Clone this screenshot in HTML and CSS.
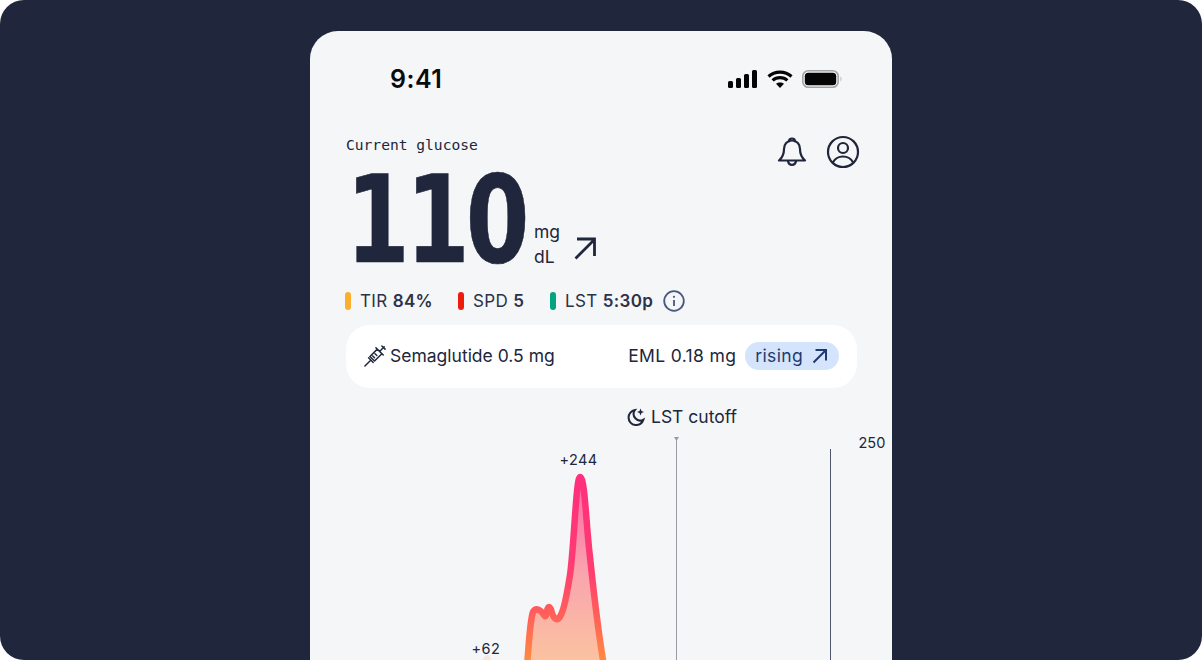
FILE: index.html
```html
<!DOCTYPE html>
<html lang="en">
<head>
<meta charset="utf-8">
<title>Glucose</title>
<link rel="stylesheet" href="styles.css">
</head>
<body>
<main class="stage">
  <section class="phone">
    <header class="status">
      <span class="clock">9:41</span>
      <div class="status-icons">
        <svg width="29" height="18" viewBox="0 0 29 18" class="signal"><rect x="0" y="11" width="5" height="7" rx="1.5"/><rect x="8" y="8" width="5" height="10" rx="1.5"/><rect x="16" y="4" width="5" height="14" rx="1.5"/><rect x="24" y="0" width="5" height="18" rx="1.5"/></svg>
        <svg width="26" height="18" viewBox="0 0 26 18" class="wifi"><path d="M1.5 6.5C7.8 0.7 18.2 0.7 24.5 6.5"/><path d="M5.6 10.4C9.8 6.7 16.2 6.700 20.4 10.4"/><path class="wifi-dot" d="M13 18l-4-4.200c2.300-1.800 5.700-1.800 8 0z"/></svg>
        <svg width="41" height="20" viewBox="0 0 41 20" class="battery"><rect x="0.8" y="1.800" width="35.400" height="16.400" rx="5.500" class="shell"/><rect x="2.800" y="3.800" width="31.400" height="12.400" rx="3.500"/><path class="cap" d="M38.500 7.500c1.300.5 1.300 4.500 0 5z"/></svg>
      </div>
    </header>

    <section class="reading">
      <div class="reading-head">
        <span class="eyebrow">Current glucose</span>
        <div class="actions">
          <svg width="30" height="34" viewBox="0 0 30 34" class="line-icon"><path d="M12 6.500a3 3 0 1 1 6 0"/><path d="M15 5.500c-5 0-8 3.700-8 8.500 0 5-1 8-5 11.500h26c-4-3.500-5-6.500-5-11.500 0-4.800-3-8.500-8-8.500z"/><path d="M11 26c.3 2.500 2 3.800 4 3.800s3.700-1.300 4-3.800"/></svg>
          <svg width="34" height="34" viewBox="0 0 34 34" class="line-icon"><circle cx="17" cy="17" r="15"/><circle cx="17" cy="13" r="5"/><path d="M6.800 27.500c2.200-4 5.800-6 10.200-6s8 2 10.200 6"/></svg>
        </div>
      </div>
      <div class="value-row">
        <span class="value"><span class="digits">110</span></span>
        <span class="unit"><span>mg</span><span>dL</span></span>
        <svg width="24" height="24" viewBox="0 0 24 24" class="arrow-big"><path d="M2.500 22.500L21.500 3.500M4 3h17.500V20"/></svg>
      </div>
      <ul class="stats">
        <li class="stat"><i class="dot amber"></i>TIR <b>84%</b></li>
        <li class="stat"><i class="dot red"></i>SPD <b>5</b></li>
        <li class="stat"><i class="dot green"></i>LST <b>5:30p</b>
          <svg width="22" height="22" viewBox="0 0 22 22" class="info"><circle cx="11" cy="11" r="9.800"/><path d="M11 10v6"/><circle class="info-dot" cx="11" cy="6.800" r="1.100"/></svg>
        </li>
      </ul>
    </section>

    <div class="dose">
      <span class="dose-name">
        <svg width="22" height="22" viewBox="0 0 24 24" class="syringe"><path d="M1 23l5.500-5.500M5 14l5 5M6.500 12.500l8-8 5 5-8 8zM13 3l8 8M17 7l5-5M19.500 1l3.500 3.500M9.500 12l2 2M12 9.500l2 2"/></svg>
        Semaglutide 0.5 mg
      </span>
      <span class="dose-side">
        EML 0.18 mg
        <span class="pill">rising
          <svg width="16" height="16" viewBox="0 0 16 16"><path d="M1.500 14.500L14 2M3.500 2H14V12.500"/></svg>
        </span>
      </span>
    </div>

    <div class="chart">
      <div class="cutoff">
        <svg width="20" height="20" viewBox="0 0 20 20" class="moon"><path d="M9 3a7.600 7.600 0 1 0 8.500 9.500 6.500 6.500 0 0 1-8.500-9.500z"/><path class="spark" d="M14.500 1.500l1 2.500 2.500 1-2.500 1-1 2.500-1-2.500-2.500-1 2.500-1z"/></svg>
        LST cutoff
      </div>
      <svg class="curve" width="582" height="260" viewBox="310 400 582 260">
        <defs>
          <linearGradient id="line-paint" gradientUnits="userSpaceOnUse" x1="0" y1="477" x2="0" y2="660">
            <stop offset="0" stop-color="#ff2f7c"/>
            <stop offset="0.5" stop-color="#ff3c72"/>
            <stop offset="0.78" stop-color="#ff6458"/>
            <stop offset="1" stop-color="#ff8a40"/>
          </linearGradient>
          <linearGradient id="area-paint" gradientUnits="userSpaceOnUse" x1="0" y1="490" x2="0" y2="660">
            <stop offset="0" stop-color="#fb6fa8"/>
            <stop offset="0.5" stop-color="#f9a5ae"/>
            <stop offset="1" stop-color="#fbc2a0"/>
          </linearGradient>
        </defs>
        <path class="guide-a" d="M676.500 660V439"/>
        <path class="guide-tip" d="M674 437h5l-2.500 4z"/>
        <path class="guide-b" d="M830.500 660V449"/>
        <path class="small-rise" d="M482 664c1-6 2-9 5-9s4 3 5 9z"/>
        <path fill="url(#area-paint)" d="M527 666C529 642 530 620 533 612C536 607 541 610 544 615C547 620 546 607 549 607C552 607 551 617 556 619C562 621 566 600 570 575C574 548 576 477 580 477C585 477 586 525 590 557C593 585 597 625 604 666Z"/>
        <path class="trace" stroke="url(#line-paint)" d="M527 666C529 642 530 620 533 612C536 607 541 610 544 615C547 620 546 607 549 607C552 607 551 617 556 619C562 621 566 600 570 575C574 548 576 477 580 477C585 477 586 525 590 557C593 585 597 625 604 666"/>
      </svg>
      <span class="tick">250</span>
      <span class="delta peak-a">+244</span>
      <span class="delta peak-b">+62</span>
    </div>
  </section>
</main>
</body>
</html>
```

FILE: styles.css
```css
* { box-sizing: border-box; margin: 0; padding: 0; }
html, body { height: 100%; background: #ffffff; overflow: hidden; }
body { font-family: "Inter", "Liberation Sans", sans-serif; color: #20263b; }

.stage { height: 660px; background: #20263b; border-radius: 24px; padding: 31px 0 0 310px; overflow: hidden; }
.phone { width: 582px; height: 629px; background: #f5f6f8; border-radius: 28px 28px 0 0; display: flex; flex-direction: column; padding: 0 35px 0 36px; overflow: hidden; }

/* status bar */
.status { height: 96px; flex: none; display: flex; align-items: center; justify-content: space-between; padding: 0 14px 0 44px; }
.clock { font-size: 25px; font-weight: 600; color: #0b0b0f; letter-spacing: .5px; }
.status-icons { display: flex; align-items: center; gap: 9px; }
.signal { fill: #050505; margin-right: 1px; }
.wifi path { fill: none; stroke: #050505; stroke-width: 3.200; }
.wifi .wifi-dot { fill: #050505; stroke: none; }
.battery rect { fill: #050505; }
.battery .shell { fill: none; stroke: #a3a3a7; stroke-width: 1.600; }
.battery .cap { fill: #b5b5b8; }

/* current reading */
.reading { flex: none; padding-top: 8px; }
.reading-head { display: flex; justify-content: space-between; height: 34px; }
.eyebrow { font-family: "DejaVu Sans Mono", "Liberation Mono", monospace; font-size: 14.600px; line-height: 20px; color: #20263b; }
.actions { display: flex; gap: 19px; margin-right: -3px; }
.line-icon { fill: none; stroke: #20263b; stroke-width: 2.200; stroke-linecap: round; stroke-linejoin: round; }
.value-row { height: 100px; display: flex; align-items: flex-end; }
.value { width: 188px; height: 100px; flex: none; display: block; }
.digits { display: inline-block; font-family: "DejaVu Sans", sans-serif; font-weight: 700; font-size: 122px; line-height: 102px; color: #20263b; transform: scaleX(.75); transform-origin: 0 0; letter-spacing: -5px; -webkit-text-stroke: .6px #20263b; }
.unit { display: flex; flex-direction: column; font-size: 17.500px; line-height: 25px; width: 39px; flex: none; }
.arrow-big { fill: none; stroke: #20263b; stroke-width: 2.800; margin-bottom: 9px; }

.stats { list-style: none; display: flex; height: 22px; margin-top: 21px; }
.stat { display: flex; align-items: center; font-size: 17px; letter-spacing: .35px; color: #2c3247; white-space: pre; }
.stat b { font-weight: 600; }
.stat:nth-child(1) { width: 113px; }
.stat:nth-child(2) { width: 92px; }
.dot { width: 6px; height: 18px; border-radius: 3px; margin: 0 9px 0 -1px; }
.amber { background: #fbb02d; }
.red { background: #ee1c0c; }
.green { background: #03a381; }
.info { fill: none; stroke: #47597f; stroke-width: 1.800; margin-left: 10px; }
.info .info-dot { fill: #47597f; stroke: none; }

/* medication card */
.dose { flex: none; height: 63px; margin-top: 13px; background: #ffffff; border-radius: 24px; display: flex; align-items: center; justify-content: space-between; padding: 0 18px 2px 18px; font-size: 17.500px; color: #20263b; }
.dose-name, .dose-side { display: flex; align-items: center; }
.dose-side { letter-spacing: .35px; }
.syringe { fill: none; stroke: #20263b; stroke-width: 1.600; stroke-linecap: round; stroke-linejoin: round; margin-right: 4px; }
.pill { display: inline-flex; align-items: center; height: 28px; margin-left: 9px; padding: 0 11px 0 10px; background: #d4e4fd; border-radius: 14px; color: #1e3a6e; gap: 9px; }
.pill svg { fill: none; stroke: #1e3a6e; stroke-width: 2; }

/* glucose chart */
.chart { position: relative; flex: 1; margin: 12px -35px 0 -36px; }
.curve { position: absolute; left: 0; top: 0; }
.trace { fill: none; stroke-width: 6.500; stroke-linejoin: round; stroke-linecap: round; }
.guide-a { stroke: #9a9ba0; stroke-width: 1; fill: none; }
.guide-tip { fill: #9a9ba0; }
.guide-b { stroke: #4f546a; stroke-width: 1; fill: none; }
.small-rise { fill: #f5e6e0; }
.cutoff { position: absolute; left: 316px; top: 5px; display: flex; align-items: center; gap: 5px; font-size: 17.500px; line-height: 24px; }
.moon { fill: none; stroke: #20263b; stroke-width: 2; }
.moon .spark { fill: #20263b; stroke: none; }
.tick, .delta { position: absolute; font-size: 14.500px; line-height: 18px; color: #20263b; }
.tick { left: 548.500px; top: 34px; }
.peak-a { left: 249.500px; top: 51px; letter-spacing: .4px; }
.peak-b { left: 161.500px; top: 240px; letter-spacing: .4px; }
```
